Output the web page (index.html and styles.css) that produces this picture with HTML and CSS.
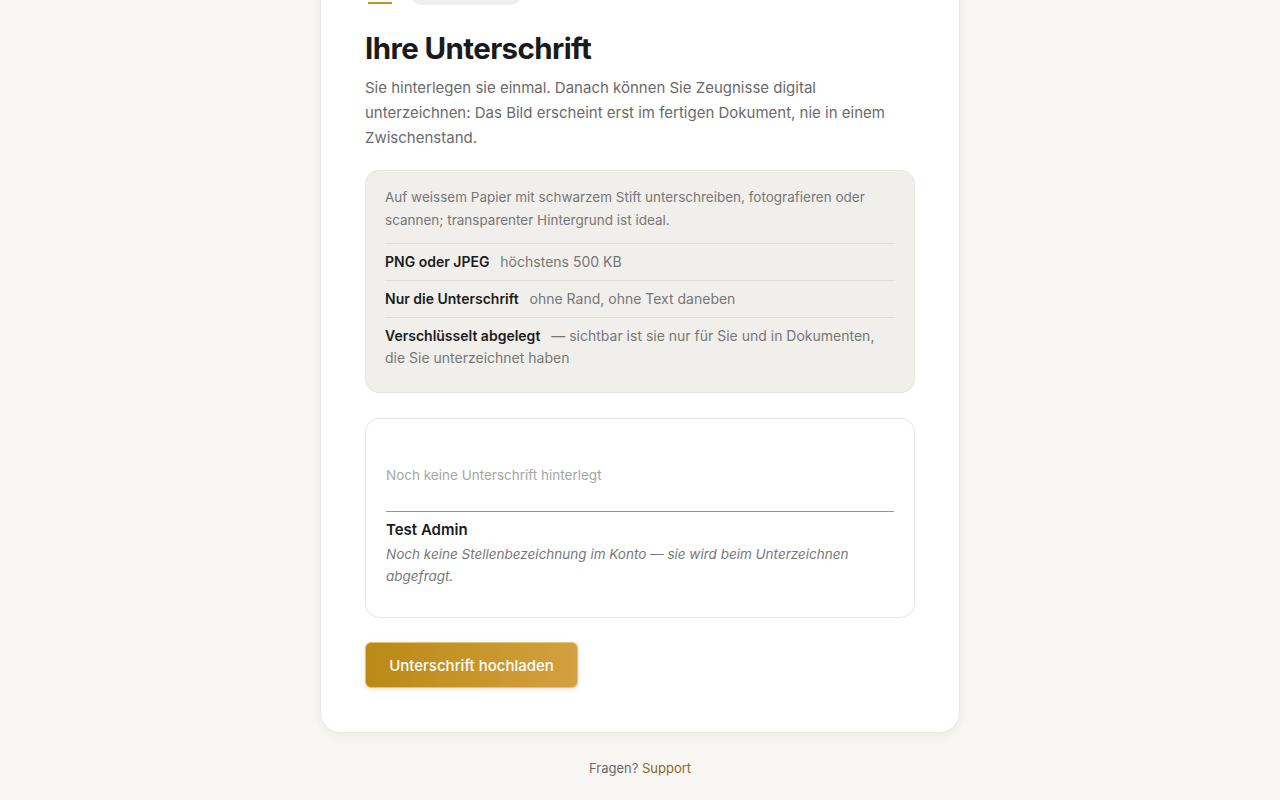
FILE: index.html
```html
<!DOCTYPE html>
<html lang="de">
<head>
<meta charset="utf-8">
<title>Ihre Unterschrift</title>
<link rel="stylesheet" href="styles.css">
</head>
<body>
<main class="page">
  <section class="card">
    <div class="card-top">
      <span class="accent-bar"></span>
      <span class="pill"></span>
    </div>
    <h1 class="title">Ihre Unterschrift</h1>
    <p class="lead">Sie hinterlegen sie einmal. Danach können Sie Zeugnisse digital unterzeichnen: Das Bild erscheint erst im fertigen Dokument, nie in einem Zwischenstand.</p>

    <div class="info">
      <p class="info-intro">Auf weissem Papier mit schwarzem Stift unterschreiben, fotografieren oder scannen; transparenter Hintergrund ist ideal.</p>
      <p class="info-row"><strong>PNG oder JPEG</strong> höchstens 500 KB</p>
      <p class="info-row"><strong>Nur die Unterschrift</strong> ohne Rand, ohne Text daneben</p>
      <p class="info-row"><strong>Verschlüsselt abgelegt</strong> — sichtbar ist sie nur für Sie und in Dokumenten, die Sie unterzeichnet haben</p>
    </div>

    <div class="sig">
      <div class="sig-area">Noch keine Unterschrift hinterlegt</div>
      <div class="sig-name">Test Admin</div>
      <p class="sig-note">Noch keine Stellenbezeichnung im Konto — sie wird beim Unterzeichnen abgefragt.</p>
    </div>

    <button class="btn" type="button">Unterschrift hochladen</button>
  </section>
  <footer class="foot">Fragen? <a href="#" class="foot-link">Support</a></footer>
</main>
</body>
</html>
```

FILE: styles.css
```css
* { box-sizing: border-box; }
html, body { margin: 0; padding: 0; }
body {
  background: #f7f6f3;
  font-family: "Inter", "Liberation Sans", sans-serif;
  color: #1c1c1c;
  height: 800px;
  overflow: hidden;
}
.page {
  display: flex;
  flex-direction: column;
  align-items: center;
}
.card {
  width: 638px;
  margin-top: -60px;
  background: #fff;
  border-radius: 20px;
  box-shadow: 0 2px 10px rgba(60, 50, 30, 0.08), 0 0 0 1px rgba(0,0,0,0.02);
  padding: 32px 44px 44px;
}
.card-top {
  display: flex;
  align-items: flex-end;
  gap: 16px;
  height: 33px;
}
.accent-bar {
  width: 24px;
  height: 2px;
  margin: 0 0 1px 3px;
  background: #c39320;
}
.pill {
  width: 116px;
  height: 30px;
  border-radius: 15px;
  background: #efefed;
}
.title {
  margin: 25px 0 0;
  font-size: 29.5px;
  line-height: 36px;
  font-weight: 700;
  letter-spacing: -0.6px;
  color: #1a1a1a;
}
.lead {
  margin: 9px 0 0;
  font-size: 15px;
  line-height: 25px;
  color: #6a6a6a;
}
.info {
  margin-top: 20px;
  background: #f0efeb;
  border: 1px solid #e7e5e0;
  border-radius: 14px;
  padding: 15px 19px 16px;
}
.info-intro {
  margin: 0 0 11px;
  font-size: 13.5px;
  line-height: 23px;
  color: #777;
}
.info-row {
  margin: 0;
  border-top: 1px solid #e0ded8;
  padding: 7px 0 7px;
  font-size: 14px;
  line-height: 22px;
  color: #777;
}
.info-row strong {
  color: #1c1c1c;
  font-weight: 600;
  margin-right: 7px;
}
.sig {
  margin-top: 25px;
  background: #fff;
  border: 1px solid #e6e6e4;
  border-radius: 14px;
  padding: 20px 20px 30px;
}
.sig-area {
  height: 73px;
  border-bottom: 1px solid #8a98a3;
  display: flex;
  align-items: center;
  font-size: 13.5px;
  color: #a8a6a2;
}
.sig-name {
  margin-top: 8px;
  font-size: 15px;
  line-height: 20px;
  font-weight: 600;
  color: #1a1a1a;
}
.sig-note {
  margin: 3px 0 0;
  font-size: 13.5px;
  line-height: 22px;
  font-style: italic;
  color: #777;
}
.btn {
  margin-top: 24px;
  width: 213px;
  height: 46px;
  border-radius: 6px;
  border: 1px solid #e3c37e;
  background: linear-gradient(90deg, #bb8915 0%, #d4a040 100%);
  color: #fff;
  font-family: inherit;
  font-size: 15px;
  font-weight: 500;
  box-shadow: 0 1px 4px rgba(190, 140, 40, 0.25);
  cursor: pointer;
}
.foot {
  margin-top: 27px;
  font-size: 13px;
  line-height: 18px;
  color: #6a6a6a;
}
.foot-link {
  color: #8b6a1f;
  text-decoration: none;
}
```
